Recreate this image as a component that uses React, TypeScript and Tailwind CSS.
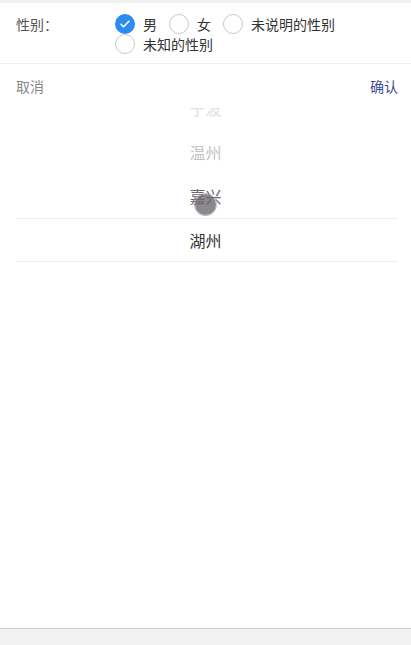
const font = { fontFamily: '"Noto Sans CJK SC", "Noto Sans", sans-serif' }

function Radio({ label, checked }: { label: string; checked?: boolean }) {
  return (
    <div className="flex items-center h-[20px] mr-[12px]">
      {checked ? (
        <span className="w-[20px] h-[20px] rounded-full bg-[#2b8cf0] flex items-center justify-center">
          <svg className="w-[12px] h-[12px] text-white" viewBox="0 0 24 24" fill="none" stroke="currentColor">
            <path strokeLinecap="round" strokeLinejoin="round" strokeWidth={3.2} d="M4 12.5l5 5L20 6.5" />
          </svg>
        </span>
      ) : (
        <span className="w-[20px] h-[20px] rounded-full border border-[#c8c9cc] bg-white" />
      )}
      <span className="ml-[8px] text-[14px] text-[#333] leading-[20px]">{label}</span>
    </div>
  )
}

export default function App() {
  const items = [
    { name: '宁波', cls: 'text-[#e2e2e2]' },
    { name: '温州', cls: 'text-[#c4c4c4]' },
    { name: '嘉兴', cls: 'text-[#6f6a70]' },
    { name: '湖州', cls: 'text-[#333]' },
  ]
  return (
    <div className="w-[411px] h-[645px] bg-white flex flex-col" style={font}>
      <div className="h-[3px] bg-[#f2f2f2]" />
      <div className="flex px-[16px] pt-[11px] pb-[9px] border-b border-[#f0f0f0]">
        <div className="w-[99px] text-[14px] text-[#555] leading-[20px]">性别：</div>
        <div className="flex flex-wrap flex-1">
          <Radio label="男" checked />
          <Radio label="女" />
          <Radio label="未说明的性别" />
          <Radio label="未知的性别" />
        </div>
      </div>
      <div className="flex justify-between items-center pr-[13px] pl-[16px] h-[44px] text-[14px]">
        <span className="text-[#888]">取消</span>
        <span className="text-[#3d4b8f]">确认</span>
      </div>
      <div className="relative h-[157px] overflow-hidden">
        <div className="-mt-[22px]">
          {items.map((it) => (
            <div key={it.name} className={`h-[44px] flex items-center justify-center text-[16px] ${it.cls}`}>
              {it.name}
            </div>
          ))}
        </div>
        <div className="absolute left-[16px] right-[13px] top-[110px] h-[44px] border-y border-[#eeeeee]" />
        <div className="absolute left-[195px] top-[86px] w-[21px] h-[21px] rounded-full bg-[#6e6a72]/80 ring-1 ring-[#9aa0b0]/60" />
      </div>
      <div className="flex-1" />
      <div className="h-[17px] bg-[#f2f2f2] border-t border-[#cfcfcf]" />
    </div>
  )
}
